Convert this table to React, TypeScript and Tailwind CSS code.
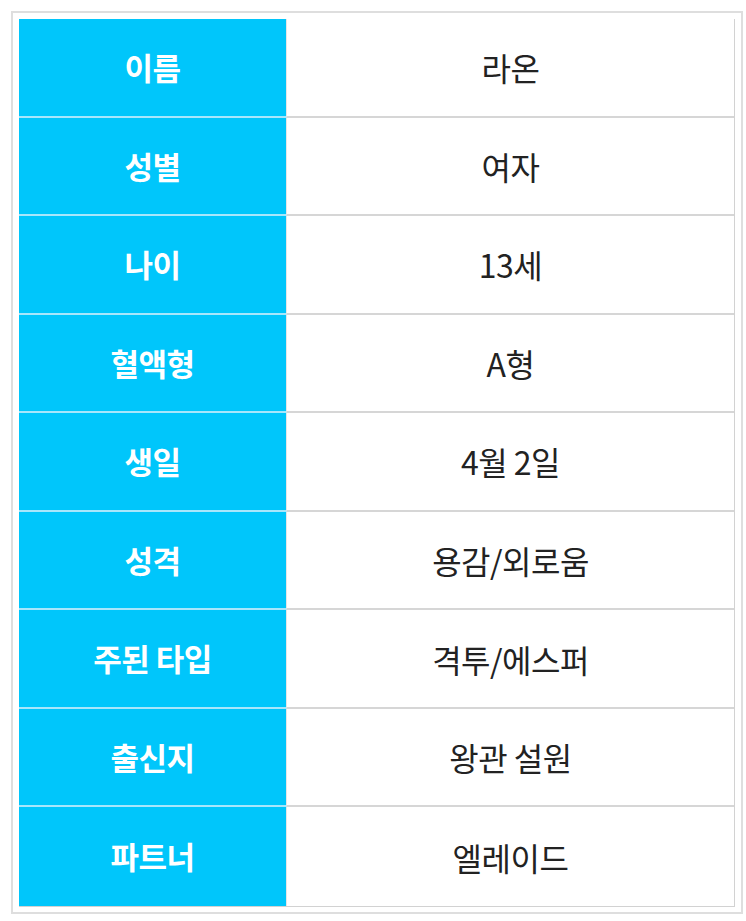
const rows = [
  { label: '이름', value: '라온' },
  { label: '성별', value: '여자' },
  { label: '나이', value: '13세' },
  { label: '혈액형', value: 'A형' },
  { label: '생일', value: '4월 2일' },
  { label: '성격', value: '용감/외로움' },
  { label: '주된 타입', value: '격투/에스퍼' },
  { label: '출신지', value: '왕관 설원' },
  { label: '파트너', value: '엘레이드' },
]

export default function App() {
  return (
    <div className="bg-white w-[746px] h-[921px] pt-[11px] pl-[11px]">
      <div
        className="w-[732px] h-[903px] border-2 border-[#dedede] p-[6px]"
        style={{ fontFamily: '"Noto Sans CJK KR", "Noto Sans", sans-serif' }}
      >
        <div className="grid grid-cols-[268px_1fr] grid-rows-9 h-[888px] border-r border-b border-[#d2d2d2]">
          {rows.map((row, i) => (
            <div key={row.label} className="contents">
              <div
                className={`flex items-center justify-center bg-[#00c6fb] text-white font-bold text-[31px] tracking-[-0.5px] border-r border-[#e6e6e6] ${
                  i < rows.length - 1 ? 'border-b-2 border-b-[#a8e6fb]' : ''
                }`}
              >
                {row.label}
              </div>
              <div
                className={`flex items-center justify-center text-[#222] text-[32px] tracking-[-0.5px] ${
                  i < rows.length - 1 ? 'border-b-2 border-[#d6d6d6]' : ''
                }`}
              >
                {row.value}
              </div>
            </div>
          ))}
        </div>
      </div>
    </div>
  )
}
